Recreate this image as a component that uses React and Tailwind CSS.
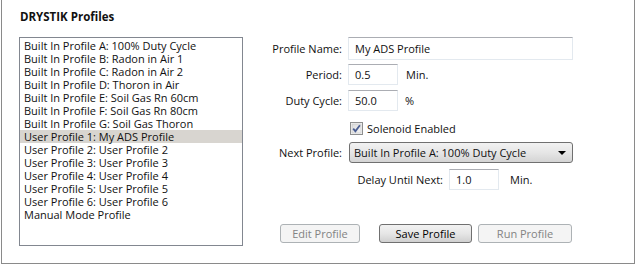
import React from 'react';

const items = [
  'Built In Profile A: 100% Duty Cycle',
  'Built In Profile B: Radon in Air 1',
  'Built In Profile C: Radon in Air 2',
  'Built In Profile D: Thoron in Air',
  'Built In Profile E: Soil Gas Rn 60cm',
  'Built In Profile F: Soil Gas Rn 80cm',
  'Built In Profile G: Soil Gas Thoron',
  'User Profile 1: My ADS Profile',
  'User Profile 2: User Profile 2',
  'User Profile 3: User Profile 3',
  'User Profile 4: User Profile 4',
  'User Profile 5: User Profile 5',
  'User Profile 6: User Profile 6',
  'Manual Mode Profile',
];

const inputCls =
  'h-full border border-[#e3e9ef] border-t-[#abadb3] bg-white px-[6px] flex items-center';

function Label({ children }) {
  return <div className="w-[80px] text-right whitespace-nowrap">{children}</div>;
}

function Check() {
  return (
    <svg width="13" height="13" viewBox="0 0 13 13">
      <defs>
        <linearGradient id="cb" x1="0" y1="0" x2="1" y2="1">
          <stop offset="0" stopColor="#dcdcdc" />
          <stop offset="1" stopColor="#f4f4f4" />
        </linearGradient>
      </defs>
      <rect x="0.5" y="0.5" width="12" height="12" fill="#f5f5f5" stroke="#8e8f8f" />
      <rect x="2" y="2" width="9" height="9" fill="url(#cb)" stroke="#c4c4c4" strokeWidth="0.6" />
      <path d="M3.2 6.6 L5.4 9.2 L9.9 3.2" fill="none" stroke="#4a5d92" strokeWidth="1.8" />
    </svg>
  );
}

export default function App() {
  return (
    <div
      className="w-[636px] h-[265px] bg-white text-[11px] leading-none text-[#111]"
      style={{ fontFamily: '"Open Sans", "Noto Sans", sans-serif' }}
    >
      <div className="ml-[1px] w-[634px] h-[264px] border-l border-r border-b border-[#8a8a8a] bg-white">
        <div className="pl-[18px] pt-[11px] h-[37px] font-bold text-[11.5px]">DRYSTIK Profiles</div>
        <div className="flex">
          {/* profile list */}
          <div className="ml-[17px] w-[224px] h-[209px] border border-[#828790] bg-white py-[1px]">
            {items.map((t, i) => (
              <div
                key={t}
                className={
                  'h-[13px] pl-[4px] flex items-center whitespace-nowrap ' +
                  (i === 7 ? 'bg-[#d8d5d0]' : '')
                }
              >
                {t}
              </div>
            ))}
          </div>

          {/* editor */}
          <div className="ml-[19px] flex flex-col">
            <div className="flex items-center h-[23px] gap-[6px]">
              <Label>Profile Name:</Label>
              <div className={inputCls + ' w-[225px]'}>My ADS Profile</div>
            </div>
            <div className="flex items-center h-[21px] gap-[6px] mt-[4px]">
              <Label>Period:</Label>
              <div className={inputCls + ' w-[50px]'}>0.5</div>
              <span className="ml-[2px]">Min.</span>
            </div>
            <div className="flex items-center h-[21px] gap-[6px] mt-[5px]">
              <Label>Duty Cycle:</Label>
              <div className={inputCls + ' w-[50px]'}>50.0</div>
              <span className="ml-[1px]">%</span>
            </div>
            <div className="flex items-center h-[14px] mt-[10px] pl-[88px] gap-[4px]">
              <Check />
              <span>Solenoid Enabled</span>
            </div>
            <div className="flex items-center h-[21px] gap-[7px] mt-[7px]">
              <Label>Next Profile:</Label>
              <div className="w-[224px] h-full rounded-[3px] border border-[#707070] bg-gradient-to-b from-[#f2f2f2] via-[#e6e6e6] to-[#d4d4d4] flex items-center pl-[4px] pr-[6px]">
                <span className="flex-1 whitespace-nowrap">Built In Profile A: 100% Duty Cycle</span>
                <svg width="8" height="4" viewBox="0 0 8 4">
                  <path d="M0 0 H8 L4 4 Z" fill="#000" />
                </svg>
              </div>
            </div>
            <div className="flex items-center h-[21px] gap-[6px] mt-[6px] pl-[81px]">
              <div className="w-[100px] text-right whitespace-nowrap">Delay Until Next:</div>
              <div className={inputCls + ' w-[50px]'}>1.0</div>
              <span className="ml-[5px]">Min.</span>
            </div>
            <div className="flex h-[19px] mt-[34px] ml-[18px] gap-[6px]">
              <div className="w-[80px] rounded-[3px] border border-[#adb2b5] bg-[#f4f4f4] text-[#838383] flex items-center justify-center">
                Edit Profile
              </div>
              <div className="ml-[13px] w-[93px] rounded-[3px] border border-[#707070] bg-gradient-to-b from-[#f2f2f2] via-[#e6e6e6] to-[#d0d0d0] text-black flex items-center justify-center">
                Save Profile
              </div>
              <div className="w-[94px] rounded-[3px] border border-[#adb2b5] bg-[#f4f4f4] text-[#838383] flex items-center justify-center">
                Run Profile
              </div>
            </div>
          </div>
        </div>
      </div>
    </div>
  );
}
